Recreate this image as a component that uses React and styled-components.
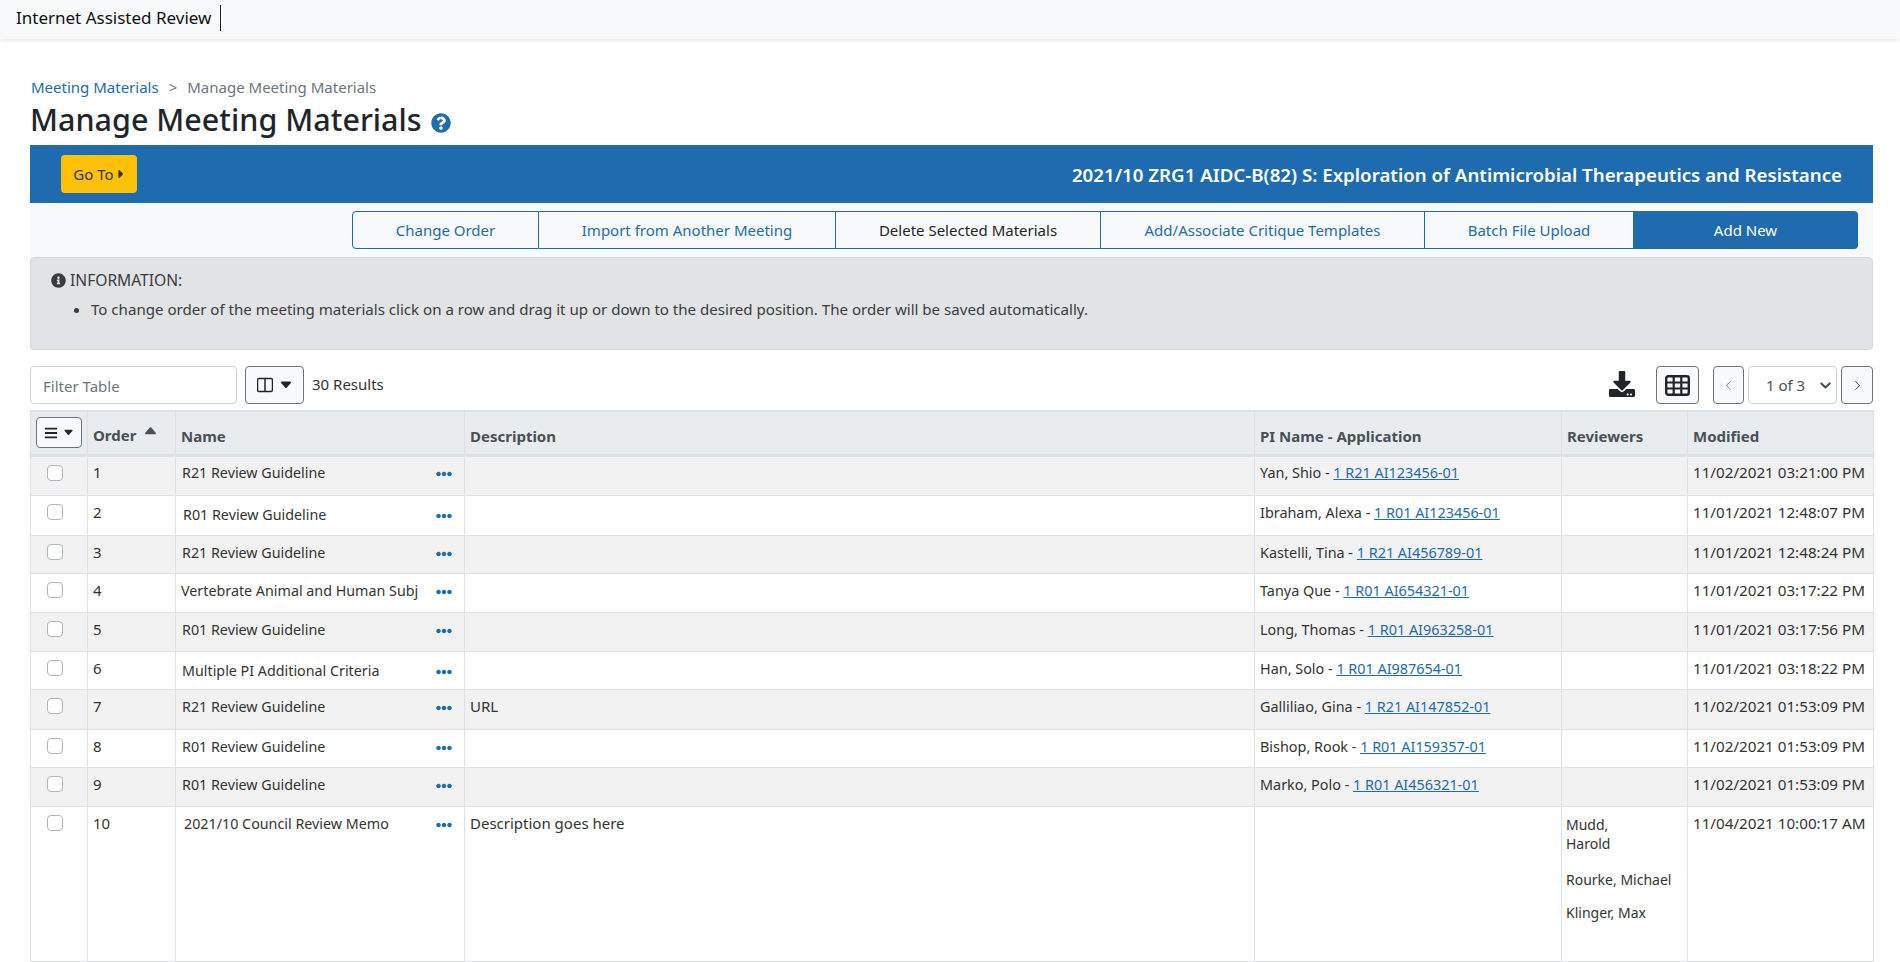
import React from "react";
import styled, { createGlobalStyle } from "styled-components";
import { FaQuestionCircle, FaInfoCircle, FaEllipsisH, FaCaretRight, FaDownload, FaBars } from "react-icons/fa";
import { BsLayoutSplit, BsChevronLeft, BsChevronRight, BsCaretUpFill, BsCaretDownFill } from "react-icons/bs";

const BLUE = "#1e6bb0";

const GlobalStyle = createGlobalStyle`
  html, body {
    margin: 0;
    padding: 0;
    background: #fff;
    color: #212529;
    font-family: "Noto Sans", "Open Sans", sans-serif;
    font-size: 15px;
    height: 962px;
    overflow: hidden;
  }
`;

const Navbar = styled.header`
  height: 39px;
  box-sizing: border-box;
  background: #f8f9fa;
  box-shadow: 0 2px 4px rgba(0, 0, 0, 0.08);
  display: flex;
  align-items: center;
  padding: 0 0 3px 16px;
`;

const Brand = styled.span`
  font-size: 17px;
  color: #111;
  padding-right: 9px;
  height: 26px;
  line-height: 26px;
  border-right: 1px solid #222;
`;

const Main = styled.main`
  padding: 38px 27px 0 30px;
`;

const Breadcrumb = styled.nav`
  display: flex;
  gap: 10px;
  height: 20px;
  line-height: 20px;
  padding-left: 1px;
  font-size: 15px;
  color: #6c757d;
`;

const Crumb = styled.a`
  color: ${BLUE};
  text-decoration: none;
`;

const Heading = styled.h1`
  margin: 0;
  height: 48px;
  line-height: 44px;
  font-size: 30.5px;
  font-weight: 500;
  color: #212529;
  display: flex;
  align-items: flex-start;
  gap: 9px;
`;

const HelpIcon = styled(FaQuestionCircle)`
  color: ${BLUE};
  font-size: 20px;
  margin-top: 16px;
`;

const BlueBar = styled.div`
  height: 58px;
  background: ${BLUE};
  display: flex;
  align-items: center;
  justify-content: space-between;
  padding: 0 31px;
`;

const GoTo = styled.button`
  width: 76px;
  height: 38px;
  border: 0;
  border-radius: 4px;
  background: #ffc107;
  color: #333;
  font: inherit;
  font-size: 15px;
  display: flex;
  align-items: center;
  justify-content: center;
  padding: 0 0 0 3px;
`;

const MeetingTitle = styled.h2`
  margin: 0;
  color: #fff;
  font-size: 18.7px;
  font-weight: 600;
`;

const ActionStrip = styled.div`
  height: 54px;
  box-sizing: border-box;
  background: #f8f9fa;
  display: flex;
  justify-content: flex-end;
  padding: 8px 15px 0 0;
`;

const ActionGroup = styled.div`
  display: flex;
  height: 38px;
`;

const ActionButton = styled.button`
  box-sizing: border-box;
  width: ${(p) => p.$w}px;
  height: 38px;
  padding: 0;
  font: inherit;
  font-size: 15px;
  border: 1px solid ${BLUE};
  border-left-width: ${(p) => (p.$first ? 1 : 0)}px;
  border-radius: ${(p) => (p.$first ? "4px 0 0 4px" : p.$last ? "0 4px 4px 0" : "0")};
  background: ${(p) => (p.$last ? BLUE : "transparent")};
  color: ${(p) => (p.$last ? "#fff" : p.$dark ? "#212529" : BLUE)};
`;

const InfoBox = styled.section`
  box-sizing: border-box;
  height: 93px;
  background: #e2e3e5;
  border: 1px solid #d6d8db;
  border-radius: 4px;
  padding: 12px 20px;
  color: #383d41;
`;

const InfoTitle = styled.div`
  display: flex;
  align-items: center;
  gap: 4px;
  height: 20px;
  line-height: 20px;
  font-size: 15.6px;
`;

const InfoList = styled.ul`
  margin: 9px 0 0;
  padding-left: 40px;
  line-height: 21px;
  font-size: 15.08px;
`;

const Toolbar = styled.div`
  margin-top: 16px;
  height: 38px;
  display: flex;
  align-items: center;
`;

const FilterInput = styled.input`
  box-sizing: border-box;
  width: 207px;
  height: 38px;
  border: 1px solid #ced4da;
  border-radius: 4px;
  padding: 1px 12px 0;
  font: inherit;
  font-size: 15px;
  outline: none;
  &::placeholder {
    color: #6c757d;
  }
`;

const OutlineButton = styled.button`
  box-sizing: border-box;
  width: ${(p) => p.$w}px;
  height: ${(p) => p.$h || 38}px;
  margin-left: ${(p) => p.$ml || 0}px;
  border: 1px solid #6c757d;
  border-radius: 4px;
  background: #f8f9fa;
  color: #212529;
  padding: 0;
  display: inline-flex;
  align-items: center;
  justify-content: center;
  gap: ${(p) => p.$gap || 0}px;
  font-size: 16px;
`;

const SplitIcon = styled(BsLayoutSplit)`
  stroke: currentColor;
  stroke-width: 0.5;
`;

const ResultCount = styled.span`
  margin-left: 8px;
  font-size: 15px;
  color: #333;
  margin-top: -2px;
`;

const ToolbarRight = styled.div`
  margin-left: auto;
  display: flex;
  align-items: center;
`;

const DownloadIcon = styled(FaDownload)`
  font-size: 26px;
  color: #212529;
  margin: -3px 21px 0 0;
`;

const PageSelect = styled.select`
  box-sizing: border-box;
  width: 89px;
  height: 38px;
  margin: 0 4px;
  border: 1px solid #ced4da;
  border-radius: 4px;
  padding: 0 0 0 17px;
  font: inherit;
  font-size: 15px;
  color: #495057;
  background: #fff url("data:image/svg+xml,%3csvg xmlns='http://www.w3.org/2000/svg' viewBox='0 0 16 16'%3e%3cpath fill='none' stroke='%23495057' stroke-linecap='round' stroke-linejoin='round' stroke-width='3' d='M2 5l6 6 6-6'/%3e%3c/svg%3e") no-repeat right 5px center / 11px 11px;
  appearance: none;
`;

const Table = styled.table`
  margin-top: 6px;
  width: 1843px;
  table-layout: fixed;
  border-collapse: collapse;
  font-size: 15px;
  color: #333;
  tbody tr:first-child td:not(:first-child) {
    padding-top: 5px;
  }
`;

const Th = styled.th`
  box-sizing: border-box;
  height: 44px;
  padding: 7px 5px 0;
  width: ${(p) => p.$w}px;
  background: #e9ecef;
  border: 1px solid #dee2e6;
  border-top-width: 2px;
  border-bottom-width: 3px;
  color: #495057;
  font-weight: 700;
  text-align: left;
  white-space: nowrap;
`;

const HeaderCellInner = styled.div`
  display: flex;
  align-items: center;
  gap: 7px;
  margin-top: -3px;
`;

const SortCaret = styled(BsCaretUpFill)`
  margin-top: -8px;
`;

const MenuCell = styled(Th)`
  padding: 0 4px 0 5px;
`;

const Row = styled.tr`
  background: ${(p) => (p.$shaded ? "#f2f2f2" : "#fff")};
  height: ${(p) => p.$h}px;
`;

const Td = styled.td`
  box-sizing: border-box;
  border: 1px solid #dee2e6;
  padding: 6px 5px 0;
  vertical-align: top;
  line-height: 21px;
  white-space: nowrap;
`;

const CheckCell = styled(Td)`
  padding: 8px 0 0 16px;
`;

const Checkbox = styled.input.attrs({ type: "checkbox" })`
  appearance: none;
  display: block;
  width: 16px;
  height: 16px;
  margin: 0;
  background: #fff;
  border: 1px solid #adb5bd;
  border-radius: 4px;
`;

const NameCell = styled(Td)`
  padding-left: ${(p) => p.$pl}px;
  padding-right: 12px;
  font-size: 14.3px;
`;

const NameWrap = styled.div`
  display: flex;
  align-items: flex-start;
  justify-content: space-between;
  padding-top: ${(p) => p.$drop || 0}px;
`;

const Dots = styled(FaEllipsisH)`
  color: ${BLUE};
  font-size: 16px;
  flex: none;
  margin-top: 4px;
`;

const PiCell = styled(Td)`
  font-size: 14.4px;
`;

const AppLink = styled.a`
  color: ${BLUE};
  text-decoration: underline;
`;

const DateCell = styled(Td)`
  font-size: 15.2px;
`;

const ReviewerCell = styled(Td)`
  padding: 8px 4px 0 4px;
  line-height: 19px;
  font-size: 14px;
  white-space: pre-line;
`;

const Reviewer = styled.p`
  margin: 0 0 14px;
  &:first-child {
    margin-bottom: 17px;
  }
`;

// rows in the reference are not all the same height
const rows = [
  { h: 40, order: 1, name: "R21 Review Guideline", pl: 6, pi: "Yan, Shio", app: "1 R21 AI123456-01", date: "11/02/2021 03:21:00 PM" },
  { h: 40, order: 2, name: "R01 Review Guideline", pl: 7, drop: 2, pi: "Ibraham, Alexa", app: "1 R01 AI123456-01", date: "11/01/2021 12:48:07 PM" },
  { h: 38, order: 3, name: "R21 Review Guideline", pl: 6, pi: "Kastelli, Tina", app: "1 R21 AI456789-01", date: "11/01/2021 12:48:24 PM" },
  { h: 39, order: 4, name: "Vertebrate Animal and Human Subj", pl: 5, pi: "Tanya Que", app: "1 R01 AI654321-01", date: "11/01/2021 03:17:22 PM" },
  { h: 39, order: 5, name: "R01 Review Guideline", pl: 6, pi: "Long, Thomas", app: "1 R01 AI963258-01", date: "11/01/2021 03:17:56 PM" },
  { h: 38, order: 6, name: "Multiple PI Additional Criteria", pl: 6, drop: 2, pi: "Han, Solo", app: "1 R01 AI987654-01", date: "11/01/2021 03:18:22 PM" },
  { h: 40, order: 7, name: "R21 Review Guideline", pl: 6, desc: "URL", pi: "Galliliao, Gina", app: "1 R21 AI147852-01", date: "11/02/2021 01:53:09 PM" },
  { h: 38, order: 8, name: "R01 Review Guideline", pl: 6, pi: "Bishop, Rook", app: "1 R01 AI159357-01", date: "11/02/2021 01:53:09 PM" },
  { h: 39, order: 9, name: "R01 Review Guideline", pl: 6, pi: "Marko, Polo", app: "1 R01 AI456321-01", date: "11/02/2021 01:53:09 PM" },
  { h: 155, order: 10, name: "2021/10 Council Review Memo", pl: 8, desc: "Description goes here", reviewers: ["Mudd,\nHarold", "Rourke, Michael", "Klinger, Max"], date: "11/04/2021 10:00:17 AM" },
];

const actions = [
  { label: "Change Order", w: 187, first: true },
  { label: "Import from Another Meeting", w: 297 },
  { label: "Delete Selected Materials", w: 265, dark: true },
  { label: "Add/Associate Critique Templates", w: 324 },
  { label: "Batch File Upload", w: 209 },
  { label: "Add New", w: 224, last: true },
];

const TableViewIcon = () => (
  <svg width="25" height="21" viewBox="0 0 25 21">
    <rect x="1.2" y="1.2" width="22.6" height="18.6" rx="2" fill="none" stroke="currentColor" strokeWidth="2.4" />
    <path d="M1 7.5h23M1 13.5h23M8.7 1v19M16.3 1v19" stroke="currentColor" strokeWidth="2.2" fill="none" />
  </svg>
);

const App = () => {
  return (
    <>
      <GlobalStyle />
      <Navbar>
        <Brand>Internet Assisted Review</Brand>
      </Navbar>
      <Main>
        <Breadcrumb>
          <Crumb href="#">Meeting Materials</Crumb>
          <span>&gt;</span>
          <span>Manage Meeting Materials</span>
        </Breadcrumb>
        <Heading>
          Manage Meeting Materials
          <HelpIcon />
        </Heading>
        <BlueBar>
          <GoTo>
            Go To
            <FaCaretRight size={14} />
          </GoTo>
          <MeetingTitle>2021/10 ZRG1 AIDC-B(82) S: Exploration of Antimicrobial Therapeutics and Resistance</MeetingTitle>
        </BlueBar>
        <ActionStrip>
          <ActionGroup>
            {actions.map((a) => (
              <ActionButton key={a.label} $w={a.w} $first={a.first} $last={a.last} $dark={a.dark}>
                {a.label}
              </ActionButton>
            ))}
          </ActionGroup>
        </ActionStrip>
        <InfoBox>
          <InfoTitle>
            <FaInfoCircle size={15} />
            INFORMATION:
          </InfoTitle>
          <InfoList>
            <li>To change order of the meeting materials click on a row and drag it up or down to the desired position. The order will be saved automatically.</li>
          </InfoList>
        </InfoBox>
        <Toolbar>
          <FilterInput placeholder="Filter Table" />
          <OutlineButton $w={59} $ml={8} $gap={6}>
            <SplitIcon size={16} />
            <BsCaretDownFill size={14} />
          </OutlineButton>
          <ResultCount>30 Results</ResultCount>
          <ToolbarRight>
            <DownloadIcon />
            <OutlineButton $w={43}>
              <TableViewIcon />
            </OutlineButton>
            <OutlineButton $w={31} $ml={14}>
              <BsChevronLeft size={11} color="#6c757d" />
            </OutlineButton>
            <PageSelect defaultValue="1">
              <option value="1">1 of 3</option>
              <option value="2">2 of 3</option>
              <option value="3">3 of 3</option>
            </PageSelect>
            <OutlineButton $w={32}>
              <BsChevronRight size={11} />
            </OutlineButton>
          </ToolbarRight>
        </Toolbar>
        <Table>
          <thead>
            <tr>
              <MenuCell $w={57}>
                <OutlineButton $w={46} $h={31} $gap={5}>
                  <FaBars size={14} />
                  <BsCaretDownFill size={11} />
                </OutlineButton>
              </MenuCell>
              <Th $w={88}>
                <HeaderCellInner>
                  Order
                  <SortCaret size={15} />
                </HeaderCellInner>
              </Th>
              <Th $w={289}>Name</Th>
              <Th $w={790}>Description</Th>
              <Th $w={307}>PI Name - Application</Th>
              <Th $w={126}>Reviewers</Th>
              <Th $w={186}>Modified</Th>
            </tr>
          </thead>
          <tbody>
            {rows.map((r, i) => (
              <Row key={r.order} $h={r.h} $shaded={i % 2 === 0}>
                <CheckCell>
                  <Checkbox />
                </CheckCell>
                <Td>{r.order}</Td>
                <NameCell $pl={r.pl}>
                  <NameWrap $drop={r.drop}>
                    {r.name}
                    <Dots />
                  </NameWrap>
                </NameCell>
                <Td>{r.desc}</Td>
                <PiCell>
                  {r.pi && (
                    <>
                      {r.pi} - <AppLink href="#">{r.app}</AppLink>
                    </>
                  )}
                </PiCell>
                {r.reviewers ? (
                  <ReviewerCell>
                    {r.reviewers.map((name) => (
                      <Reviewer key={name}>{name}</Reviewer>
                    ))}
                  </ReviewerCell>
                ) : (
                  <Td />
                )}
                <DateCell>{r.date}</DateCell>
              </Row>
            ))}
          </tbody>
        </Table>
      </Main>
    </>
  );
};

export default App;
